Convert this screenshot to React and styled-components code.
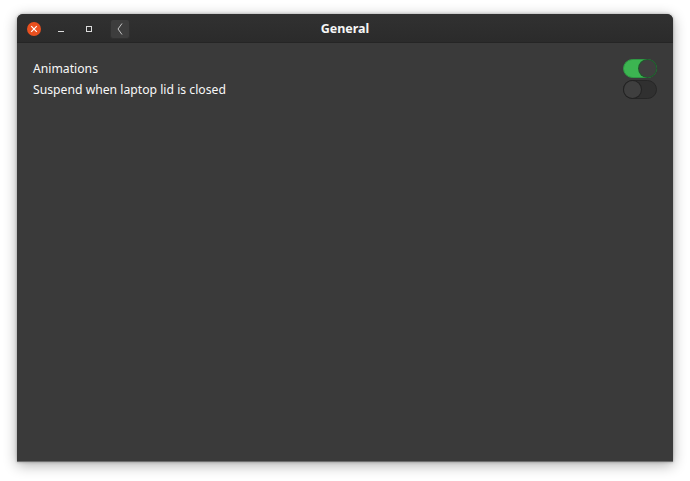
import React from "react";
import styled, { createGlobalStyle } from "styled-components";

const GlobalStyle = createGlobalStyle`
  html, body {
    margin: 0;
    padding: 0;
    background: #fff;
  }
`;

const Desktop = styled.div`
  width: 690px;
  height: 481px;
  padding: 14px 17px 19px;
  box-sizing: border-box;
  overflow: hidden;
  font-family: "Noto Sans", sans-serif;
`;

const Window = styled.div`
  height: 100%;
  display: flex;
  flex-direction: column;
  background: #3a3a3a;
  border-radius: 6px 6px 0 0;
  border-bottom: 1px solid #6e6e6e;
  box-sizing: border-box;
  box-shadow: 0 3px 14px rgba(0, 0, 0, 0.32), 0 0 3px rgba(0, 0, 0, 0.3);
`;

const HeaderBar = styled.header`
  position: relative;
  height: 29px;
  flex: none;
  display: flex;
  align-items: center;
  padding: 1px 0 0 10px;
  background: linear-gradient(#313131, #2b2b2b);
  border-radius: 6px 6px 0 0;
  border-bottom: 1px solid #252525;
  box-sizing: border-box;
`;

const Title = styled.div`
  position: absolute;
  left: 0;
  right: 0;
  text-align: center;
  color: #f6f6f6;
  font-size: 12.5px;
  font-weight: 700;
`;

const CloseButton = styled.div`
  width: 14px;
  height: 14px;
  border-radius: 50%;
  background: #e9501f;
  display: flex;
  align-items: center;
  justify-content: center;
`;

const WindowButton = styled.div`
  width: 14px;
  height: 14px;
  margin-left: ${props => props.gap}px;
  display: flex;
  align-items: center;
  justify-content: center;
`;

const BackButton = styled.div`
  width: 20px;
  height: 20px;
  margin-left: 14px;
  border-radius: 3px;
  background: #3d3d3d;
  border: 1px solid #303030;
  box-sizing: border-box;
  display: flex;
  align-items: center;
  justify-content: center;
`;

const Content = styled.main`
  padding: 15px 16px 0;
  display: flex;
  flex-direction: column;
  gap: 1px;
`;

const Row = styled.div`
  height: 20px;
  display: flex;
  align-items: center;
  justify-content: space-between;
`;

const Label = styled.span`
  color: #f8f8f8;
  font-size: 12.2px;
`;

const Track = styled.div`
  width: 34px;
  height: 19px;
  border-radius: 10px;
  box-sizing: border-box;
  display: flex;
  justify-content: ${props => (props.on ? "flex-end" : "flex-start")};
  background: ${props => (props.on ? "#3cb551" : "#303030")};
  border: 1px solid ${props => (props.on ? "#2f9a44" : "#262626")};
`;

const Knob = styled.div`
  width: 17px;
  height: 17px;
  border-radius: 50%;
  background: #3f3f3f;
  box-shadow: 0 0 0 1px ${props => (props.on ? "#1f5a2c" : "#232323")};
`;

const Toggle = ({ on }) => (
  <Track on={on ? 1 : 0}>
    <Knob on={on ? 1 : 0} />
  </Track>
);

const App = () => (
  <>
    <GlobalStyle />
    <Desktop>
      <Window>
        <HeaderBar>
          <CloseButton>
            <svg width="8" height="8" viewBox="0 0 8 8">
              <path d="M1.2 1.2 6.8 6.8M6.8 1.2 1.2 6.8" stroke="#fff" strokeWidth="1.2" />
            </svg>
          </CloseButton>
          <WindowButton gap={13}>
            <svg width="8" height="8" viewBox="0 0 8 8">
              <path d="M1 6.5H7" stroke="#dcdcdc" strokeWidth="1" />
            </svg>
          </WindowButton>
          <WindowButton gap={14}>
            <svg width="8" height="8" viewBox="0 0 8 8">
              <rect x="1.5" y="1.5" width="5" height="5" fill="none" stroke="#dcdcdc" strokeWidth="1" />
            </svg>
          </WindowButton>
          <BackButton>
            <svg width="8" height="14" viewBox="0 0 8 14">
              <path d="M6 1.5 2 7l4 5.5" fill="none" stroke="#c4c4c4" strokeWidth="1" />
            </svg>
          </BackButton>
          <Title>General</Title>
        </HeaderBar>
        <Content>
          <Row>
            <Label>Animations</Label>
            <Toggle on />
          </Row>
          <Row>
            <Label>Suspend when laptop lid is closed</Label>
            <Toggle />
          </Row>
        </Content>
      </Window>
    </Desktop>
  </>
);

export default App;
